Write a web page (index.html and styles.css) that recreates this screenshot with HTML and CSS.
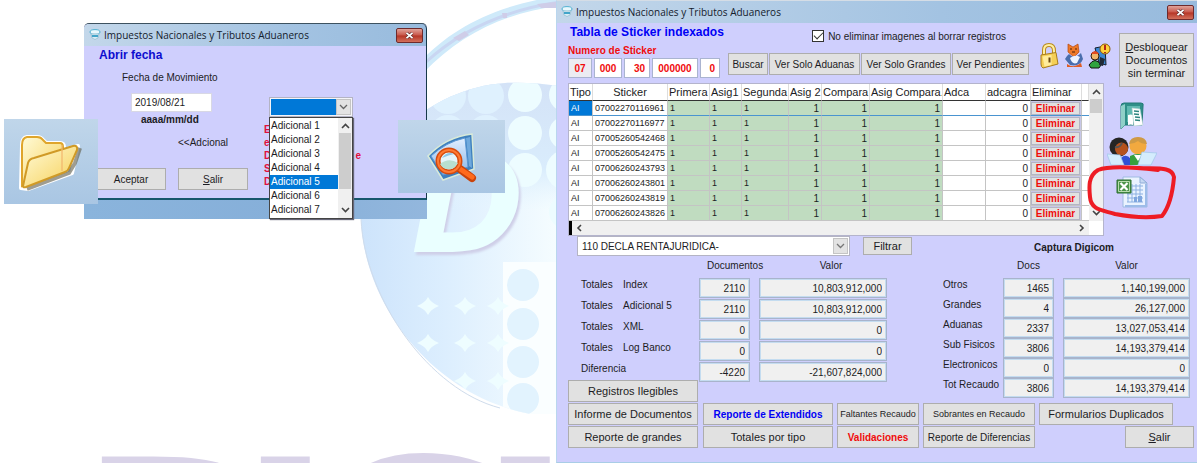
FILE: index.html
```html
<!DOCTYPE html>
<html lang="es">
<head>
<meta charset="utf-8">
<title>Impuestos Nacionales y Tributos Aduaneros</title>
<link rel="stylesheet" href="styles.css">
</head>
<body>
<div class="desktop">
  <svg class="wallpaper" width="560" height="463" viewBox="0 0 560 463" aria-hidden="true">
    <defs>
      <linearGradient id="disc" x1="0" y1="0" x2="1" y2="0">
        <stop offset="0" stop-color="#cbe2fb"/><stop offset=".45" stop-color="#dceefe"/><stop offset="1" stop-color="#f6fdff"/>
      </linearGradient>
      <linearGradient id="patch" x1="0" y1="0" x2="0" y2="1">
        <stop offset="0" stop-color="#d3e1f6"/><stop offset=".7" stop-color="#d9ecfc"/><stop offset="1" stop-color="#e4f5ff" stop-opacity="0"/>
      </linearGradient>
      <clipPath id="round"><path d="M505 83C430 88 361 150 361 215C361 300 430 395 530 414H560V86C540 83 520 82 505 83Z"/></clipPath>
    </defs>
    <path d="M420 62C452 28 495 5 560 -4V6C505 12 460 35 424 72Z" fill="#cfeafa"/>
    <path d="M426 62C462 29 505 10 560 2" fill="none" stroke="#c9d6f2" stroke-width="3"/>
    <path d="M453 38l12-7 4 4-10 6ZM502 13h5v5h-4ZM537 4l19-2v6h-15Z" fill="#cfcde8"/>
    <g clip-path="url(#round)">
      <path d="M350 70H560V420H350Z" fill="url(#disc)"/>
      <path d="M427 70H560V210H427Z" fill="url(#patch)"/>
      <g fill="#dff1fe">
        <circle cx="486" cy="96" r="18"/><circle cx="448" cy="96" r="18"/><circle cx="448" cy="133" r="18"/><circle cx="486" cy="133" r="18"/>
      </g>
      <g fill="#edfcff">
        <circle cx="525" cy="95" r="17"/><circle cx="566" cy="95" r="17"/><circle cx="525" cy="133" r="17"/><circle cx="566" cy="133" r="17"/>
        <circle cx="525" cy="170" r="17"/><circle cx="566" cy="170" r="20"/><circle cx="566" cy="212" r="17"/>
      </g>
      <path d="M503 262H560V420H503Z" fill="#fafeff"/>
      <g fill="#e2f3fe">
        <circle cx="523" cy="285" r="16"/><circle cx="523" cy="324" r="16"/><circle cx="523" cy="362" r="16"/><circle cx="523" cy="399" r="16"/>
      </g>
      <g fill="#eefdff">
        <path id="star" d="M465 297q3 6 11 9q-8 3-11 9q-3-6-11-9q8-3 11-9Z"/>
        <use href="#star" y="37"/><use href="#star" y="75"/><use href="#star" x="-37"/><use href="#star" x="-37" y="37"/>
        <use href="#star" x="33"/><use href="#star" x="33" y="37"/><use href="#star" x="33" y="75"/>
      </g>
    </g>
    <path d="M361 219C365 300 430 390 500 408" fill="none" stroke="#cfdcec" stroke-width="1"/>
    <text class="brand-mark" x="411" y="252">D</text>
    <text class="brand-name" x="78 237 305 477" y="646">DIGI</text>
  </svg>

  <section class="window dialog" aria-label="Abrir fecha">
    <header class="titlebar">
      <svg class="app-icon" width="12" height="12" viewBox="0 0 12 12"><ellipse cx="6" cy="3" rx="5" ry="2.4" fill="#e8f8fd" stroke="#4fb0d0"/><path d="M2 5h8l-1 4q-3 3-6 0Z" fill="#d9edf5" stroke="#8cb8cb" stroke-width=".7"/><path d="M3 6h6v2H3z" fill="#42a5c9"/></svg>
      <span class="caption">Impuestos Nacionales y Tributos Aduaneros</span>
      <button class="close" aria-label="Cerrar"><svg width="9" height="7" viewBox="0 0 9 7"><path d="M1.500 .8l6 5.400M7.500 .8l-6 5.400" stroke="#5e2a2a" stroke-width="3"/><path d="M1.500 .8l6 5.400M7.500 .8l-6 5.400" stroke="#fff" stroke-width="1.800"/></svg></button>
    </header>
    <div class="dialog-body">
      <h2>Abrir fecha</h2>
      <div class="date-side">
        <label for="fecha">Fecha de Movimiento</label>
        <input id="fecha" class="date" value="2019/08/21">
        <b class="hint">aaaa/mm/dd</b>
        <label class="extra" for="adicional">&lt;&lt;Adcional</label>
        <div class="dialog-buttons"><button class="btn">Aceptar</button><button class="btn"><u>S</u>alir</button></div>
      </div>
      <div class="extra-side">
        <div class="combo small">
          <select id="adicional" aria-label="Adicional"><option></option></select>
          <span class="arrow"><svg width="9" height="6" viewBox="0 0 9 6"><path d="M1 1l3.500 3.500L8 1" fill="none" stroke="#666" stroke-width="1.300"/></svg></span>
        </div>
        <p class="warning"><span>E</span><span>e</span><span class="split">D<i>e</i></span><span>S</span><span>D</span></p>
        <div class="dropdown">
          <ul role="listbox" aria-label="Adicional">
            <li role="option">Adicional 1</li><li role="option">Adicional 2</li><li role="option">Adicional 3</li><li role="option">Adicional 4</li><li role="option" aria-selected="true" class="selected">Adicional 5</li><li role="option">Adicional 6</li><li role="option">Adicional 7</li>
          </ul>
          <div class="vbar">
            <svg width="9" height="6" viewBox="0 0 9 6"><path d="M1 5l3.500-3.500L8 5" fill="none" stroke="#444" stroke-width="1.600"/></svg>
            <span class="thumb tall"></span>
            <svg width="9" height="6" viewBox="0 0 9 6"><path d="M1 1l3.500 3.500L8 1" fill="none" stroke="#444" stroke-width="1.600"/></svg>
          </div>
        </div>
      </div>
    </div>
    <div class="dialog-foot"></div>
  </section>

  <button class="tile open-tile" aria-label="Abrir">
    <svg width="72" height="62" viewBox="0 0 72 62">
      <defs><linearGradient id="fold" x1="0" y1="0" x2="1" y2="1"><stop offset="0" stop-color="#fffbd8"/><stop offset="1" stop-color="#f6cf55"/></linearGradient></defs>
      <path d="M6 57L7 14Q7 7 12 6H22Q26 6 28 9L31 12H45Q49 12 49 16V19L63 15L57 42L13 58Z" fill="none" stroke="#fff" stroke-width="4" stroke-linejoin="round"/>
      <path d="M12 58L54 42L60 32L65 17" fill="none" stroke="#5f5c48" stroke-width="4" opacity=".6"/>
      <path d="M7 55L7 14Q7 7 12 6H22Q26 6 28 9L31 12H45Q48 12 48 16V41Z" fill="url(#fold)" stroke="#dfa52b" stroke-width="2"/>
      <path d="M8 55L13 32Q14 28 19 27L58 15Q63 14 62 19L54 37Q53 40 50 41L11 56Q8 57 8 55Z" fill="url(#fold)" stroke="#d09a26" stroke-width="2"/>
      <path d="M47 14V40" stroke="#f3b66c" stroke-width="2" opacity=".6"/>
    </svg>
  </button>
  <button class="tile search-tile" aria-label="Buscar documento">
    <svg width="52" height="52" viewBox="0 0 52 52">
      <defs><linearGradient id="sheet" x1="0" y1="0" x2="0" y2="1"><stop offset="0" stop-color="#e3efff"/><stop offset="1" stop-color="#85b5e8"/></linearGradient></defs>
      <path d="M2 25Q20 6 46 3L48 38L17 49Z" fill="#3f80bd" stroke="#d8ead9" stroke-width="1.500"/>
      <path d="M5 25Q20 11 39 7L42 36L17 44Z" fill="url(#sheet)" stroke="#5a97d4"/>
      <path d="M40 7l4-1 2 31-3-2Z" fill="#6fa9dd"/>
      <path d="M34 38L46 47" stroke="#c9430b" stroke-width="8" stroke-linecap="round"/><path d="M34 38L46 46" stroke="#ff6a1c" stroke-width="5" stroke-linecap="round"/>
      <circle cx="23" cy="30" r="11" fill="#e5f5fb" stroke="#d64a0c" stroke-width="5"/><circle cx="23" cy="30" r="11" fill="none" stroke="#ff7a33" stroke-width="2"/>
      <path d="M14 33q9-7 18-1q-4 7-9 6q-6 1-9-5Z" fill="#b8dfcf"/><path d="M16 27q5-7 12-4q-5 1-12 4Z" fill="#8fc5e6"/>
    </svg>
  </button>

  <main class="window main-window">
    <header class="titlebar">
      <svg class="app-icon" width="12" height="12" viewBox="0 0 12 12"><ellipse cx="6" cy="3" rx="5" ry="2.4" fill="#e8f8fd" stroke="#4fb0d0"/><path d="M2 5h8l-1 4q-3 3-6 0Z" fill="#d9edf5" stroke="#8cb8cb" stroke-width=".7"/><path d="M3 6h6v2H3z" fill="#42a5c9"/></svg>
      <span class="caption">Impuestos Nacionales y Tributos Aduaneros</span>
      <button class="close" aria-label="Cerrar"><svg width="9" height="7" viewBox="0 0 9 7"><path d="M1.500 .8l6 5.400M7.500 .8l-6 5.400" stroke="#5e2a2a" stroke-width="3"/><path d="M1.500 .8l6 5.400M7.500 .8l-6 5.400" stroke="#fff" stroke-width="1.800"/></svg></button>
    </header>
    <div class="content">
      <div class="top">
        <div class="tools">
          <div class="heading">
            <h1>Tabla de Sticker indexados</h1>
            <label class="check"><input type="checkbox" checked>No eliminar imagenes al borrar registros</label>
          </div>
          <div class="toolbar">
            <fieldset class="sticker">
              <legend>Numero de Sticker</legend>
              <div class="codes">
                <input class="w24 off" aria-label="Tipo" value="07">
                <input class="w28" aria-label="Banco" value="000">
                <input class="w26 right" aria-label="Lote" value="30">
                <input class="w46" aria-label="Numero" value="000000">
                <input class="w20 right" aria-label="Digito" value="0">
              </div>
            </fieldset>
            <div class="actions">
              <button class="btn">Buscar</button><button class="btn">Ver Solo Aduanas</button><button class="btn">Ver Solo Grandes</button><button class="btn">Ver Pendientes</button>
            </div>
          </div>
        </div>
        <div class="shortcuts">
          <button class="icon" aria-label="Bloquear"><svg width="21" height="26" viewBox="0 0 21 26"><path d="M5 13V7Q5 2 10 2T15 8V11" fill="none" stroke="#b98a1e" stroke-width="4"/><path d="M5 13V7Q5 2 10 2T15 8V11" fill="none" stroke="#fff0a0" stroke-width="2"/><path d="M2 12L17 9.500L19 21L4 25Q2 24 2 21Z" fill="#f5cf55" stroke="#a87c1c"/><path d="M3.500 13.500l9-1.500v10l-7 1.500Z" fill="#ffec9b"/><path d="M9.500 14.500l2 0v5h-2Z" fill="#6d4a10"/></svg></button>
          <button class="icon" aria-label="Mascota"><svg width="20" height="26" viewBox="0 0 20 26"><path d="M4 1l5 3 5-3 1 8-5 5-6-5Z" fill="#ee7928" stroke="#b5460f" stroke-width=".7"/><path d="M6 6h2M11 6h2M8 9h3" stroke="#522407"/><path d="M5 11q5 6 12-1l2 6q-3 8-13 6l-5-6 2-3Z" fill="#4a6ead"/><path d="M6 15q5-4 10-1l-3 6q-5 2-7-5Z" fill="#edf3ff"/><path d="M3 21q7 5 14-1l1 4H3Z" fill="#df5d24"/></svg></button>
          <button class="icon" aria-label="Ayuda"><svg width="23" height="26" viewBox="0 0 23 26"><path d="M7 5l10-2 1 19-7-2Z" fill="#3b87d4" stroke="#15202b"/><circle cx="17" cy="6" r="5" fill="#ffd23c" stroke="#8a5708"/><path d="M17 2v5M17 9v1" stroke="#b42818" stroke-width="2"/><circle cx="7" cy="13" r="4" fill="#f0b568" stroke="#2d1a0d"/><path d="M3 11q4-6 8 0Z" fill="#e34b20"/><path d="M1 22q6-9 12 0l-2 3H3Z" fill="#2fa33f" stroke="#111"/><path d="M12 14l5 2-2 7-4-1Z" fill="#202a36"/></svg></button>
        </div>
        <button class="btn unlock"><u>D</u>esbloquear Documentos sin terminar</button>
      </div>

      <div class="middle">
        <div class="grid-box">
          <div class="rows">
            <table>
              <colgroup><col class="c24"><col class="c75"><col class="c42"><col class="c32"><col class="c47"><col class="c33"><col class="c48"><col class="c73"><col class="c43"><col class="c45"><col class="c51"><col></colgroup>
              <thead><tr><th>Tipo</th><th class="mid">Sticker</th><th>Primera</th><th>Asig1</th><th>Segunda</th><th>Asig 2</th><th>Compara</th><th>Asig Compara.</th><th>Adca</th><th>adcagra</th><th>Eliminar</th><th></th></tr></thead>
              <tbody>
                <tr class="current"><td>AI</td><td>07002270116961</td><td>1</td><td>1</td><td>1</td><td>1</td><td>1</td><td>1</td><td></td><td>0</td><td><button class="del">Eliminar</button></td><td></td></tr>
                <tr><td>AI</td><td>07002270116977</td><td>1</td><td>1</td><td>1</td><td>1</td><td>1</td><td>1</td><td></td><td>0</td><td><button class="del">Eliminar</button></td><td></td></tr>
                <tr><td>AI</td><td>07005260542468</td><td>1</td><td>1</td><td>1</td><td>1</td><td>1</td><td>1</td><td></td><td>0</td><td><button class="del">Eliminar</button></td><td></td></tr>
                <tr><td>AI</td><td>07005260542475</td><td>1</td><td>1</td><td>1</td><td>1</td><td>1</td><td>1</td><td></td><td>0</td><td><button class="del">Eliminar</button></td><td></td></tr>
                <tr><td>AI</td><td>07006260243793</td><td>1</td><td>1</td><td>1</td><td>1</td><td>1</td><td>1</td><td></td><td>0</td><td><button class="del">Eliminar</button></td><td></td></tr>
                <tr><td>AI</td><td>07006260243801</td><td>1</td><td>1</td><td>1</td><td>1</td><td>1</td><td>1</td><td></td><td>0</td><td><button class="del">Eliminar</button></td><td></td></tr>
                <tr><td>AI</td><td>07006260243819</td><td>1</td><td>1</td><td>1</td><td>1</td><td>1</td><td>1</td><td></td><td>0</td><td><button class="del">Eliminar</button></td><td></td></tr>
                <tr><td>AI</td><td>07006260243826</td><td>1</td><td>1</td><td>1</td><td>1</td><td>1</td><td>1</td><td></td><td>0</td><td><button class="del">Eliminar</button></td><td></td></tr>
              </tbody>
            </table>
          </div>
          <div class="vbar wide">
            <svg width="9" height="6" viewBox="0 0 9 6"><path d="M1 5l3.500-3.500L8 5" fill="none" stroke="#444" stroke-width="1.600"/></svg>
            <span class="thumb"></span>
            <svg width="9" height="6" viewBox="0 0 9 6"><path d="M1 1l3.500 3.500L8 1" fill="none" stroke="#444" stroke-width="1.600"/></svg>
          </div>
          <div class="hbar">
            <svg width="6" height="8" viewBox="0 0 6 8"><path d="M5 1L2 4l3 3" fill="none" stroke="#444" stroke-width="1.600"/></svg>
            <svg width="6" height="8" viewBox="0 0 6 8"><path d="M1 1l3 3-3 3" fill="none" stroke="#444" stroke-width="1.600"/></svg>
          </div>
        </div>
        <div class="side">
          <button class="icon" aria-label="Documentos"><svg width="26" height="28" viewBox="0 0 26 28"><path d="M2 4Q2 1 5 1H22Q25 1 24 4L23 23H6L2 27Z" fill="#2f8f88" stroke="#237a76"/><path d="M2 4L6 2V23L2 27Z" fill="#8fd0c8"/><path d="M8 4H21V20H8Z" fill="#5fb8b0"/><path d="M9 13q3-1 5 0v10q-2-1-5 0Z" fill="#fff"/><path d="M13 6l8 1 3 16-9 1Z" fill="#fff" stroke="#b8d5d4" stroke-width=".6"/><path d="M15 9l5 .5M15 12l5 .5M16 15l5 .5M16 18l5 .5" stroke="#2f8580" stroke-width="1.500"/></svg></button>
          <button class="icon" aria-label="Usuarios"><svg width="50" height="30" viewBox="0 0 50 30"><circle cx="12" cy="11" r="9.500" fill="#252525"/><circle cx="14.500" cy="13" r="6.500" fill="#b5521d"/><path d="M8 11q5 1 7-4" stroke="#555" stroke-width="2" fill="none"/><circle cx="31" cy="10" r="8.500" fill="#f2a93f"/><path d="M22 8Q23 1 31 1T40 8Q34 8 31 5Q27 8 22 8Z" fill="#cf9a45"/><path d="M14 29V22q5-5 10 1v6Z" fill="#3150d4"/><path d="M23 29V20q8-4 16 0v9Z" fill="#37a03e"/><path d="M27 19l4 6 4-6Z" fill="#fff"/><path d="M0 18l13 1 4 10H4Z" fill="#d4ecfd" stroke="#9fc6e8" stroke-width=".7"/><path d="M35 16l15 1-6 12H31Z" fill="#d4ecfd" stroke="#9fc6e8" stroke-width=".7"/></svg></button>
          <button class="icon" aria-label="Exportar a Excel"><svg width="32" height="32" viewBox="0 0 32 32"><path d="M7 1H24L31 7V31H7Z" fill="#eaf3ff" stroke="#9ebbe2"/><path d="M24 1v6h7Z" fill="#c6d8f2" stroke="#8facd8"/><path d="M29 8h2v23H9v-2h20Z" fill="#9dbce8"/><path d="M16 10H27M11 18H27M11 22H27M11 26H27M16 14H27M12 17V26M16 8V26M20 8V26M24 8V26" stroke="#8db1e2"/><path d="M18 21h3v5h-3zM22 20h4v6h-4z" fill="#7fa6de"/><path d="M1 4H15V17H1Z" fill="#4b9448" stroke="#2f7133"/><path d="M2.500 5.500h11v10h-11z" fill="none" stroke="#b8dcae"/><path d="M4.500 7l7 7M11.500 7l-7 7" stroke="#fff" stroke-width="2.200"/></svg></button>
        </div>
        <svg class="mark" width="92" height="58" viewBox="0 0 92 58" aria-hidden="true"><path d="M72 6C55 4 25 1 12 6C2 12 3 23 4 33C5 46 16 46 29 50C45 53 63 54 76 52C84 42 87 25 88 13C86 2 70 5 53 4" fill="none" stroke="#ee1c24" stroke-width="4" stroke-linecap="round" stroke-linejoin="round"/></svg>
      </div>

      <div class="filter">
        <div class="combo">
          <select aria-label="Declaracion"><option>110 DECLA RENTAJURIDICA-</option></select>
          <span class="arrow"><svg width="9" height="6" viewBox="0 0 9 6"><path d="M1 1l3.500 3.500L8 1" fill="none" stroke="#777" stroke-width="1.300"/></svg></span>
        </div>
        <button class="btn">Filtrar</button>
        <h2 class="capture">Captura Digicom</h2>
      </div>

      <div class="totals">
        <div class="left-totals">
          <div class="sums index-sums">
            <span></span><span class="col">Documentos</span><span class="col">Valor</span>
            <label for="d1"><span>Totales</span>Index</label><input id="d1" readonly value="2110"><input aria-label="Valor Index" readonly value="10,803,912,000">
            <label for="d2"><span>Totales</span>Adicional 5</label><input id="d2" readonly value="2110"><input aria-label="Valor Adicional 5" readonly value="10,803,912,000">
            <label for="d3"><span>Totales</span>XML</label><input id="d3" readonly value="0"><input aria-label="Valor XML" readonly value="0">
            <label for="d4"><span>Totales</span>Log Banco</label><input id="d4" readonly value="0"><input aria-label="Valor Log Banco" readonly value="0">
            <label for="d5">Diferencia</label><input id="d5" readonly value="-4220"><input aria-label="Valor Diferencia" readonly value="-21,607,824,000">
          </div>
          <button class="btn illegible">Registros Ilegibles</button>
        </div>
        <div class="sums capture-sums">
          <span></span><span class="col">Docs</span><span class="col">Valor</span>
          <label for="e1">Otros</label><input id="e1" readonly value="1465"><input aria-label="Valor Otros" readonly value="1,140,199,000">
          <label for="e2">Grandes</label><input id="e2" readonly value="4"><input aria-label="Valor Grandes" readonly value="26,127,000">
          <label for="e3">Aduanas</label><input id="e3" readonly value="2337"><input aria-label="Valor Aduanas" readonly value="13,027,053,414">
          <label for="e4">Sub Fisicos</label><input id="e4" readonly value="3806"><input aria-label="Valor Sub Fisicos" readonly value="14,193,379,414">
          <label for="e5">Electronicos</label><input id="e5" readonly value="0"><input aria-label="Valor Electronicos" readonly value="0">
          <label for="e6">Tot Recaudo</label><input id="e6" readonly value="3806"><input aria-label="Valor Tot Recaudo" readonly value="14,193,379,414">
        </div>
      </div>

      <div class="reports">
        <button class="btn">Informe de Documentos</button><button class="btn blue">Reporte de Extendidos</button><button class="btn tiny">Faltantes Recaudo</button><button class="btn tiny">Sobrantes en Recaudo</button><button class="btn duplicates">Formularios Duplicados</button>
        <button class="btn">Reporte de grandes</button><button class="btn">Totales por tipo</button><button class="btn red">Validaciones</button><button class="btn compact">Reporte de Diferencias</button><button class="btn exit"><u>S</u>alir</button>
      </div>
    </div>
  </main>
</div>
</body>
</html>
```
FILE: styles.css
```css
* { box-sizing: border-box; }

body {
  margin: 0;
  background: #fff;
  color: #1c1c24;
  font: 11px/13px "Liberation Sans", Arial, sans-serif;
}

h1, h2, p, ul, fieldset { margin: 0; padding: 0; border: 0; }
ul { list-style: none; }
svg { display: block; }
button, input, select { margin: 0; font: inherit; color: inherit; border-radius: 0; }

.desktop {
  position: relative;
  display: grid;
  grid-template-columns: 556px 1fr;
  min-height: 100vh;
  overflow: hidden;
}

.wallpaper { position: absolute; left: 0; top: 0; }
.brand-mark { font: italic bold 137px "DejaVu Sans", sans-serif; fill: #eaffff; filter: drop-shadow(2px 3px 1px #cfcfe8); }
.brand-name { font: bold 260px "DejaVu Sans", sans-serif; fill: #d9d3e8; }

/* Windows */
.window { background: #cfcffd; }
.titlebar {
  display: flex;
  align-items: center;
  gap: 3px;
  height: 22px;
  padding: 0 3px 0 4px;
  background: linear-gradient(90deg, #c3d7ea, #a3c3e2 60%, #98bbdd);
}
.caption { flex: 1; font: 10px/14px "Open Sans", "Noto Sans", sans-serif; color: #14202c; white-space: nowrap; }
.close {
  display: grid;
  place-items: center;
  width: 27px;
  height: 15px;
  padding: 0;
  border: 1px solid #6e2a2c;
  border-radius: 2px;
  background: linear-gradient(#e0a39a, #c9574a 48%, #b53526 52%, #d3705c);
}

.btn {
  height: 22px;
  padding: 0 2px;
  border: 1px solid #adadad;
  background: #e1e1e1;
  text-align: center;
  white-space: nowrap;
}
.icon { padding: 0; border: 0; background: none; }

/* Date dialog */
.dialog {
  position: absolute;
  left: 84px;
  top: 23px;
  width: 343px;
  border-top: 1px solid #3d5260;
  border-radius: 5px 5px 0 0;
}
.dialog .titlebar { padding-left: 5px; border-radius: 5px 5px 0 0; border-right: 1px solid #17384a; }
.dialog-body {
  display: grid;
  grid-template-columns: 166px 1fr;
  grid-template-rows: 20px 132px;
  padding: 0 0 0 12px;
  border-right: 1px solid #17384a;
  border-bottom: 2px solid #17566c;
}
.dialog h2 { grid-column: 1 / 3; padding: 3px 3px; font-size: 12px; color: #0d0dcf; }
.date-side { display: flex; flex-direction: column; align-items: flex-start; padding-top: 5px; font-size: 10px; }
.date-side > label:first-child { padding-left: 26px; }
.date { width: 81px; height: 19px; margin: 9px 0 1px 35px; padding: 0 3px; border: 1px solid #d8d8e4; background: #fff; font-size: 10px; }
.hint { padding-left: 45px; }
.extra { margin-top: 10px; padding-left: 82px; }
.dialog-buttons { display: grid; grid-template-columns: 70px 70px; gap: 12px; margin-top: 19px; font-size: 10px; }
.extra-side { position: relative; padding: 31px 0 0 7px; }

.combo { display: grid; height: 20px; }
.combo > * { grid-area: 1 / 1; }
.combo select { appearance: none; width: 100%; padding: 0 4px; border: 1px solid #b4b4c4; background: #fff; font-size: 10px; }
.combo .arrow { justify-self: end; display: grid; place-items: center; width: 15px; margin: 2px; border: 1px solid #c4c4c4; background: #e3e3e3; pointer-events: none; }
.combo.small { width: 84px; }
.combo.small select { background: #0078d7; border: 2px solid #f4f4f8; outline: 1px solid #b4b4c4; outline-offset: -1px; }
.warning { display: grid; grid-auto-rows: 13px; width: 97px; margin-top: 6px; margin-left: -5px; color: #e0103c; font-size: 10px; font-weight: bold; }
.split { display: flex; justify-content: space-between; }
.split i { font-style: normal; }
.dropdown {
  position: absolute;
  left: 7px;
  top: 51px;
  display: grid;
  grid-template-columns: 1fr 14px;
  width: 84px;
  border: 1px solid #444;
  background: #fff;
  box-shadow: 1px 1px 1px #667;
}
.dropdown li { height: 14px; padding: 0 1px; font-size: 10px; line-height: 14px; white-space: nowrap; }
.dropdown ul { padding: 1px 0; }
.dropdown .selected { background: #0078d7; color: #fff; }
.dialog-foot { height: 19px; background: linear-gradient(90deg, #8ab4dc, #86afd9 60%, #93b7dd); }

.vbar { display: flex; flex-direction: column; align-items: center; padding: 5px 0; background: #f0f0f0; }
.vbar .thumb { width: 12px; height: 14px; margin: 4px 0 auto; background: #cdcdcd; }
.vbar .tall { height: 56px; }

/* Picture tiles */
.tile { position: absolute; display: grid; place-items: center; padding: 0; border: 0; background: linear-gradient(#c0d6ea, #a9c6e3); }
.open-tile { left: 4px; top: 119px; width: 94px; height: 85px; }
.search-tile { left: 398px; top: 120px; width: 107px; height: 73px; }

/* Main window */
.main-window { position: relative; grid-column: 2; border-top: 1px solid #d5dde6; border-bottom: 1px solid #a9cde6; border-left: 1px solid #b9d6ee; }
.content { padding: 0 3px 0 11px; }

.top { display: flex; align-items: flex-start; height: 60px; }
.tools { width: 461px; }
.heading { display: flex; justify-content: space-between; height: 24px; padding: 2px 23px 0 2px; }
.heading h1 { font-size: 12px; line-height: 14px; color: #0000f5; }
.check { display: flex; align-items: center; gap: 4px; font-size: 10px; }
.check input { appearance: none; width: 12px; height: 12px; border: 1px solid #333; background: #fff; }
.check input:checked::before { content: ""; display: block; width: 8px; height: 4px; margin: 1px; border: solid #333; border-width: 0 0 1px 1px; rotate: -45deg; }

.toolbar { display: flex; justify-content: space-between; align-items: flex-start; height: 34px; }
.sticker { min-width: 0; margin-top: -3px; color: #f00c0c; font-size: 10px; font-weight: bold; }
.sticker legend { padding: 0; line-height: 14px; }
.codes { display: flex; gap: 2px; }
.codes input { height: 20px; padding: 0; border: 1px solid #aab4d0; background: #fff; text-align: center; }
.codes .right { padding-right: 4px; text-align: right; }
.codes .off { background: #ececf2; }
.w20 { width: 20px; } .w24 { width: 24px; } .w26 { width: 26px; } .w28 { width: 28px; } .w46 { width: 46px; }
.actions { display: grid; grid-template-columns: 40px 91px 90px 77px; gap: 1px; margin-top: 6px; font-size: 10px; }

.shortcuts { display: flex; flex: 1; gap: 4px; padding: 20px 0 0 10px; }
.unlock { width: 75px; height: 54px; padding: 0 4px; font-size: 11px; white-space: normal; margin-top: 10px; }

.middle { position: relative; display: flex; gap: 3px; }
.grid-box { display: grid; grid-template-columns: 1fr 14px; grid-template-rows: 137px 14px; width: 536px; border: 1px solid #b4b4cc; background: #fff; }
.rows { overflow: hidden; }
table { width: 100%; border-collapse: separate; border-spacing: 0; table-layout: fixed; }
.c24 { width: 24px; } .c75 { width: 75px; } .c42 { width: 42px; } .c32 { width: 32px; } .c47 { width: 47px; } .c33 { width: 33px; }
.c48 { width: 48px; } .c73 { width: 73px; } .c43 { width: 43px; } .c45 { width: 45px; } .c51 { width: 51px; }
th { height: 17px; padding: 0 1px; border-right: 1px solid #ddd; border-bottom: 1px solid #333; font-size: 11px; font-weight: normal; text-align: left; white-space: nowrap; line-height: 14px; overflow: hidden; }
th.mid { text-align: center; }
td { height: 15px; padding: 1px 2px 0; border-right: 1px solid #c4c4c4; border-bottom: 1px solid #c4c4c4; font-size: 9px; line-height: 13px; white-space: nowrap; }
td:nth-child(n+3):nth-child(-n+8) { background: #c0dcc0; }
td:nth-child(n+6) { text-align: right; font-size: 10px; }
td:nth-child(11) { padding: 0; background: #c8c8e8; }
td:last-child { border-right: 0; }
.current td { border-bottom-color: #4a94d0; }
.current td:first-child { background: #0078d7; color: #fff; }
.del { display: block; width: 49px; height: 13px; padding: 0; border: 1px solid #b4b4c4; background: #e1e1e1; color: #f00c0c; font-size: 10px; font-weight: bold; line-height: 11px; }
.hbar { display: flex; align-items: center; justify-content: space-between; padding: 0 4px; border-left: 3px solid #000; background: #f0f0f0; }

.side { display: flex; flex-direction: column; align-items: center; gap: 6px; width: 50px; padding-top: 19px; }
.side .icon:last-child { margin-top: 4px; }
.mark { position: absolute; left: 518px; top: 81px; }

.filter { display: flex; height: 22px; padding: 0 80px 0 9px; }
.filter .combo { width: 273px; }
.filter .btn { width: 49px; height: 18px; margin: 1px auto 0 13px; }
.capture { align-self: center; font-size: 10px; }

.totals { display: flex; justify-content: space-between; padding-right: 4px; }
.left-totals { width: 318px; }
.sums { display: grid; column-gap: 9px; align-items: start; font-size: 10px; white-space: nowrap; }
.sums .col { padding-top: 1px; text-align: center; }
.sums label { display: flex; line-height: 14px; }
.sums label span { width: 42px; }
.sums input { width: 100%; height: 20px; padding: 0 4px; border: 1px solid #a8b4cc; outline: 1px solid #c4dcf0; outline-offset: -2px; background: #f0f0f0; text-align: right; }
.index-sums { grid-template-columns: 109px 51px 128px; grid-template-rows: 20px repeat(5, 21px); padding-left: 13px; }
.index-sums .col { padding-left: 8px; }
.index-sums .col + .col { padding-left: 16px; }
.capture-sums { grid-template-columns: 51px 51px 127px; grid-template-rows: 20px repeat(6, 20px); }
.illegible { width: 130px; margin-top: -3px; }

.reports { display: grid; grid-template-columns: 131px 130px 82px 112px 1fr; gap: 1px 4px; padding-top: 1px; }
.reports .btn:nth-child(5n+1) { width: 130px; }
.tiny { font-size: 9px; }
.compact { font-size: 10px; }
.blue { color: #0000f5; font-size: 10px; font-weight: bold; }
.red { color: #f00c0c; font-size: 10px; font-weight: bold; }
.duplicates { width: 134px; }
.exit { justify-self: end; width: 69px; }
```
